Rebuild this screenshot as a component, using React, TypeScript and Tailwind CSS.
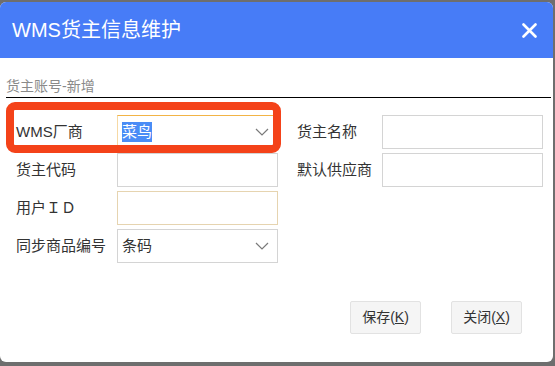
const font = { fontFamily: '"Liberation Sans", "Noto Sans CJK SC", sans-serif' };

function Chevron() {
  return (
    <svg width="14" height="8" viewBox="0 0 14 8" fill="none" className="shrink-0">
      <polyline points="1,1 7,7 13,1" stroke="#7a7a7a" strokeWidth="1.2" />
    </svg>
  );
}

function Label({ children }: { children: React.ReactNode }) {
  return <div className="flex items-center text-[15px] text-[#333]">{children}</div>;
}

export default function App() {
  return (
    <div className="h-[366px] w-[555px] overflow-hidden bg-[#6e6e6e]" style={font}>
      <div className="relative mt-[2px] h-[360px] w-[553px] overflow-hidden rounded-[6px] bg-white">
        <div className="flex h-[56px] items-center justify-between bg-[#477cf7] pl-[12px] pr-[16px]">
          <span className="text-[20px] text-white">WMS货主信息维护</span>
          <svg width="15" height="15" viewBox="0 0 15 15">
            <path d="M1.5 1.5 L13.5 13.5 M13.5 1.5 L1.5 13.5" stroke="white" strokeWidth="2.6" strokeLinecap="round" />
          </svg>
        </div>

        <div className="ml-[6px] mr-[2px] border-b border-black pt-[18px] pb-[1px] text-[14px] leading-[20px] text-[#8a8a8a]">
          货主账号-新增
        </div>

        <div className="grid grid-cols-[101px_161px_19px_85px_161px] auto-rows-[34px] gap-y-[4px] pl-[16px] pt-[17px]">
          <Label>WMS厂商</Label>
          <div className="flex items-center justify-between border border-[#f2b446] border-l-[#f6d9a4] pl-[4px] pr-[8px]">
            <span className="bg-[#4a8cf6] text-[15px] leading-[20px] text-white">菜鸟</span>
            <Chevron />
          </div>
          <div />
          <Label>货主名称</Label>
          <div className="border border-[#d4d4d4]" />

          <Label>货主代码</Label>
          <div className="border border-[#d4d4d4]" />
          <div />
          <Label>默认供应商</Label>
          <div className="border border-[#d4d4d4]" />

          <Label>用户ＩＤ</Label>
          <div className="border border-[#e6d4b0]" />
          <div />
          <div />
          <div />

          <Label>同步商品编号</Label>
          <div className="flex items-center justify-between border border-[#d4d4d4] pl-[4px] pr-[8px]">
            <span className="text-[15px] text-[#333]">条码</span>
            <Chevron />
          </div>
        </div>

        <div className="mt-[38px] flex justify-end gap-[30px] pr-[31px]">
          <button className="h-[33px] w-[71px] rounded-[2px] border border-[#e2e2e2] bg-[#f5f5f5] text-[14px] text-[#333]">
            保存(<span className="underline">K</span>)
          </button>
          <button className="h-[33px] w-[71px] rounded-[2px] border border-[#e2e2e2] bg-[#f5f5f5] text-[14px] text-[#333]">
            关闭(<span className="underline">X</span>)
          </button>
        </div>

        <div className="absolute left-[6px] top-[100px] h-[51px] w-[275px] rounded-[9px] border-[8px] border-[#f44219]" />
      </div>
    </div>
  );
}
